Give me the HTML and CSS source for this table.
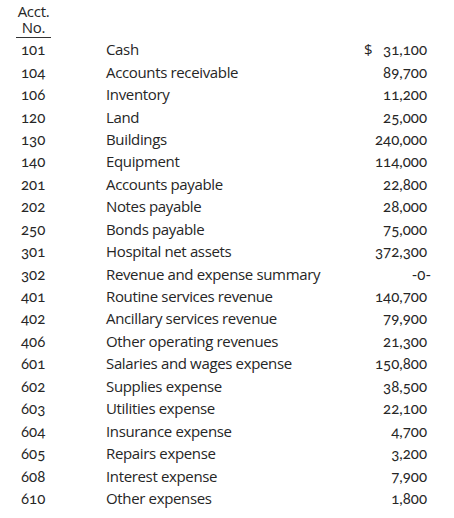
FILE: index.html
```html
<!DOCTYPE html>
<html>
<head>
<meta charset="utf-8">
<link rel="stylesheet" href="styles.css">
</head>
<body>
<div class="sheet">
  <div class="head"><span>Acct.</span><span>No.</span></div>
  <div class="rows">
    <div class="row"><span class="no">101</span><span class="name">Cash</span><span class="amt"><span class="cur">$</span>31,100</span></div>
    <div class="row"><span class="no">104</span><span class="name">Accounts receivable</span><span class="amt">89,700</span></div>
    <div class="row"><span class="no">106</span><span class="name">Inventory</span><span class="amt">11,200</span></div>
    <div class="row"><span class="no">120</span><span class="name">Land</span><span class="amt">25,000</span></div>
    <div class="row"><span class="no">130</span><span class="name">Buildings</span><span class="amt">240,000</span></div>
    <div class="row"><span class="no">140</span><span class="name">Equipment</span><span class="amt">114,000</span></div>
    <div class="row"><span class="no">201</span><span class="name">Accounts payable</span><span class="amt">22,800</span></div>
    <div class="row"><span class="no">202</span><span class="name">Notes payable</span><span class="amt">28,000</span></div>
    <div class="row"><span class="no">250</span><span class="name">Bonds payable</span><span class="amt">75,000</span></div>
    <div class="row"><span class="no">301</span><span class="name">Hospital net assets</span><span class="amt">372,300</span></div>
    <div class="row"><span class="no">302</span><span class="name">Revenue and expense summary</span><span class="amt zero">-0-</span></div>
    <div class="row"><span class="no">401</span><span class="name">Routine services revenue</span><span class="amt">140,700</span></div>
    <div class="row"><span class="no">402</span><span class="name">Ancillary services revenue</span><span class="amt">79,900</span></div>
    <div class="row"><span class="no">406</span><span class="name">Other operating revenues</span><span class="amt">21,300</span></div>
    <div class="row"><span class="no">601</span><span class="name">Salaries and wages expense</span><span class="amt">150,800</span></div>
    <div class="row"><span class="no">602</span><span class="name">Supplies expense</span><span class="amt">38,500</span></div>
    <div class="row"><span class="no">603</span><span class="name">Utilities expense</span><span class="amt">22,100</span></div>
    <div class="row"><span class="no">604</span><span class="name">Insurance expense</span><span class="amt">4,700</span></div>
    <div class="row"><span class="no">605</span><span class="name">Repairs expense</span><span class="amt">3,200</span></div>
    <div class="row"><span class="no">608</span><span class="name">Interest expense</span><span class="amt">7,900</span></div>
    <div class="row"><span class="no">610</span><span class="name">Other expenses</span><span class="amt">1,800</span></div>
  </div>
</div>
</body>
</html>
```

FILE: styles.css
```css
html, body {
  margin: 0;
  background: #fff;
}
.sheet {
  font-family: "Open Sans", "Lato", sans-serif;
  color: #262626;
  padding: 3px 0 0 16px;
  width: 411px;
}
.head {
  width: 35px;
  display: flex;
  flex-direction: column;
  align-items: center;
  font-size: 15px;
  line-height: 16px;
  letter-spacing: -0.3px;
  font-stretch: 92%;
  border-bottom: 1px solid #333;
  padding-bottom: 2px;
}
.rows {
  display: flex;
  flex-direction: column;
}
.row {
  display: grid;
  grid-template-columns: 90px 1fr 65px;
  height: 22.45px;
  align-items: center;
  font-size: 15px;
  line-height: 20px;
}
.no {
  padding-left: 5px;
  font-family: "Lato", sans-serif;
  font-variant-numeric: oldstyle-nums;
}
.name {
  letter-spacing: -0.35px;
  font-weight: 450;
  white-space: nowrap;
}
.amt {
  font-family: "Lato", sans-serif;
  font-variant-numeric: oldstyle-nums;
  display: flex;
  justify-content: flex-end;
  white-space: nowrap;
}
.amt.zero {
  margin-right: -4px;
}
.cur {
  font-family: "Open Sans", sans-serif;
  font-variant-numeric: lining-nums;
  margin-right: auto;
  padding-left: 2px;
}
```
